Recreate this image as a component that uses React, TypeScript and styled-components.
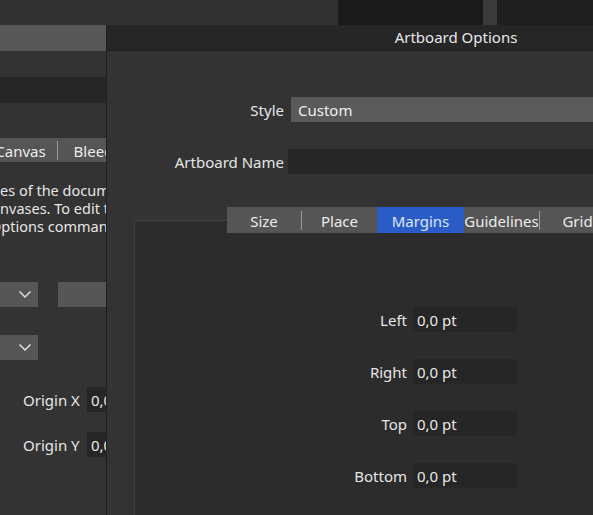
import React from "react";
import styled, { createGlobalStyle } from "styled-components";

const Global = createGlobalStyle`
  html, body { margin: 0; padding: 0; background: #333333; overflow: hidden; }
  body { font-family: "Noto Sans", "Open Sans", sans-serif; font-size: 15px; color: #e4e4e4; }
  * { box-sizing: border-box; }
`;

const Screen = styled.div`
  width: 593px;
  height: 515px;
  display: flex;
  flex-direction: column;
  overflow: hidden;
  background: #333333;
`;

const TopStrip = styled.div`
  height: 25px;
  display: flex;
  flex-shrink: 0;
`;

const StripPart = styled.div<{ $w?: number; $bg: string }>`
  width: ${(p) => (p.$w ? `${p.$w}px` : "auto")};
  flex: ${(p) => (p.$w ? "0 0 auto" : "1 1 auto")};
  background: ${(p) => p.$bg};
`;

const Desk = styled.div`
  flex: 1;
  display: flex;
  min-height: 0;
`;

/* ---------- background window (left) ---------- */

const BackWindow = styled.div`
  width: 106px;
  flex-shrink: 0;
  overflow: hidden;
  background: #333333;
  display: flex;
  flex-direction: column;
`;

const Band = styled.div<{ $bg: string; $h: number }>`
  height: ${(p) => p.$h}px;
  flex-shrink: 0;
  background: ${(p) => p.$bg};
`;

const BackTabs = styled.div`
  margin-top: 35px;
  height: 24px;
  flex-shrink: 0;
  background: #555555;
  display: flex;
  align-items: center;
  margin-left: -16px;
  width: 220px;
`;

const Tab = styled.div<{ $w: number; $active?: boolean }>`
  width: ${(p) => p.$w}px;
  height: 100%;
  flex-shrink: 0;
  display: flex;
  align-items: center;
  justify-content: center;
  padding-top: 1px;
  white-space: nowrap;
  font-size: 15px;
  background: ${(p) => (p.$active ? "#2b5cc6" : "transparent")};
  color: ${(p) => (p.$active ? "#dbe6ff" : "#ececec")};
`;

const TabDivider = styled.div`
  width: 1px;
  height: 19px;
  flex-shrink: 0;
  background: #9a9a9a;
`;

const Para = styled.div`
  margin-top: 19px;
  display: flex;
  flex-direction: column;
`;

const ParaLine = styled.div<{ $shift: number }>`
  height: 18px;
  line-height: 18px;
  white-space: nowrap;
  font-size: 14.5px;
  margin-left: ${(p) => p.$shift}px;
  color: #e6e6e6;
`;

const ComboRow = styled.div<{ $top: number }>`
  margin-top: ${(p) => p.$top}px;
  height: 25px;
  flex-shrink: 0;
  display: flex;
  gap: 20px;
`;

const Combo = styled.div`
  width: 38px;
  height: 25px;
  flex-shrink: 0;
  background: #555555;
  display: flex;
  align-items: center;
  justify-content: flex-end;
  padding-right: 6px;
`;

const GreyBox = styled.div`
  width: 60px;
  height: 25px;
  flex-shrink: 0;
  background: #555555;
`;

const OriginRow = styled.div<{ $top: number }>`
  margin-top: ${(p) => p.$top}px;
  height: 25px;
  flex-shrink: 0;
  display: flex;
  align-items: center;
  padding-left: 23px;
  gap: 6px;
`;

const OriginLabel = styled.div`
  width: 58px;
  flex-shrink: 0;
  white-space: nowrap;
  padding-top: 1px;
  color: #e6e6e6;
`;

const DarkField = styled.div<{ $w: number }>`
  width: ${(p) => p.$w}px;
  height: 25px;
  flex-shrink: 0;
  background: #262626;
  display: flex;
  align-items: center;
  padding: 1px 0 0 4px;
  white-space: nowrap;
  overflow: hidden;
  color: #e8e8e8;
`;

/* ---------- front dialog ---------- */

const Dialog = styled.div`
  width: 699px;
  flex-shrink: 0;
  background: #333333;
  border-left: 1px solid #1f1f1f;
  display: flex;
  flex-direction: column;
`;

const TitleBar = styled.div`
  height: 26px;
  flex-shrink: 0;
  background: #262626;
  border-bottom: 1px solid #1e1e1e;
  display: flex;
  align-items: center;
  justify-content: center;
  padding-bottom: 2px;
  font-size: 15px;
  color: #e8e8e8;
`;

const FieldGrid = styled.div`
  margin-top: 46px;
  display: grid;
  grid-template-columns: 177px 480px;
  column-gap: 7px;
  row-gap: 27px;
  align-items: center;
`;

const FieldLabel = styled.div`
  text-align: right;
  white-space: nowrap;
  padding-top: 1px;
  color: #e6e6e6;
`;

const SelectBox = styled.div`
  height: 25px;
  background: #5a5a5a;
  display: flex;
  align-items: center;
  padding: 1px 0 0 7px;
  color: #f0f0f0;
`;

const NameInput = styled.div`
  height: 25px;
  margin-left: -3px;
  background: #262626;
`;

const Panel = styled.div`
  margin: 46px 0 0 27px;
  width: 645px;
  flex: 1;
  background: #2c2c2c;
  border-top: 1px solid #444444;
  border-left: 1px solid #404040;
  display: flex;
  flex-direction: column;
`;

const TabBar = styled.div`
  margin: -14px 0 0 92px;
  height: 26px;
  display: flex;
  align-items: center;
  background: #555555;
  width: 463px;
`;

const MarginGrid = styled.div`
  margin: 74px 0 0 152px;
  display: grid;
  grid-template-columns: 120px 104px;
  column-gap: 6px;
  row-gap: 27px;
  align-items: center;
`;

const Chevron = () => (
  <svg width="14" height="9" viewBox="0 0 14 9" fill="none">
    <polyline points="1.5,1.5 7,7 12.5,1.5" stroke="#e0e0e0" strokeWidth="1.5" />
  </svg>
);

const margins = ["Left", "Right", "Top", "Bottom"];

export default function App() {
  return (
    <>
      <Global />
      <Screen>
        <TopStrip>
          <StripPart $w={338} $bg="#323232" />
          <StripPart $w={145} $bg="#1a1a1a" />
          <StripPart $w={14} $bg="#3a3a3a" />
          <StripPart $bg="#1e1e1e" />
        </TopStrip>
        <Desk>
          <BackWindow>
            <Band $h={26} $bg="#575757" />
            <Band $h={26} $bg="#333333" />
            <Band $h={26} $bg="#262626" />
            <BackTabs>
              <Tab $w={73}>Canvas</Tab>
              <TabDivider />
              <Tab $w={71}>Bleed</Tab>
            </BackTabs>
            <Para>
              <ParaLine $shift={0}>es of the document</ParaLine>
              <ParaLine $shift={-15}>canvases. To edit these</ParaLine>
              <ParaLine $shift={-10}>Options command</ParaLine>
            </Para>
            <ComboRow $top={47}>
              <Combo>
                <Chevron />
              </Combo>
              <GreyBox />
            </ComboRow>
            <ComboRow $top={28}>
              <Combo>
                <Chevron />
              </Combo>
            </ComboRow>
            <OriginRow $top={27}>
              <OriginLabel>Origin X</OriginLabel>
              <DarkField $w={40}>0,0 pt</DarkField>
            </OriginRow>
            <OriginRow $top={20}>
              <OriginLabel>Origin Y</OriginLabel>
              <DarkField $w={40}>0,0 pt</DarkField>
            </OriginRow>
          </BackWindow>
          <Dialog>
            <TitleBar>Artboard Options</TitleBar>
            <FieldGrid>
              <FieldLabel>Style</FieldLabel>
              <SelectBox>Custom</SelectBox>
              <FieldLabel>Artboard Name</FieldLabel>
              <NameInput />
            </FieldGrid>
            <Panel>
              <TabBar>
                <Tab $w={74}>Size</Tab>
                <TabDivider />
                <Tab $w={75}>Place</Tab>
                <Tab $w={87} $active>
                  Margins
                </Tab>
                <Tab $w={75}>Guidelines</Tab>
                <TabDivider />
                <Tab $w={75}>Grid</Tab>
                <Tab $w={75}>Layout</Tab>
              </TabBar>
              <MarginGrid>
                {margins.map((m) => (
                  <React.Fragment key={m}>
                    <FieldLabel>{m}</FieldLabel>
                    <DarkField $w={104}>0,0 pt</DarkField>
                  </React.Fragment>
                ))}
              </MarginGrid>
            </Panel>
          </Dialog>
        </Desk>
      </Screen>
    </>
  );
}
